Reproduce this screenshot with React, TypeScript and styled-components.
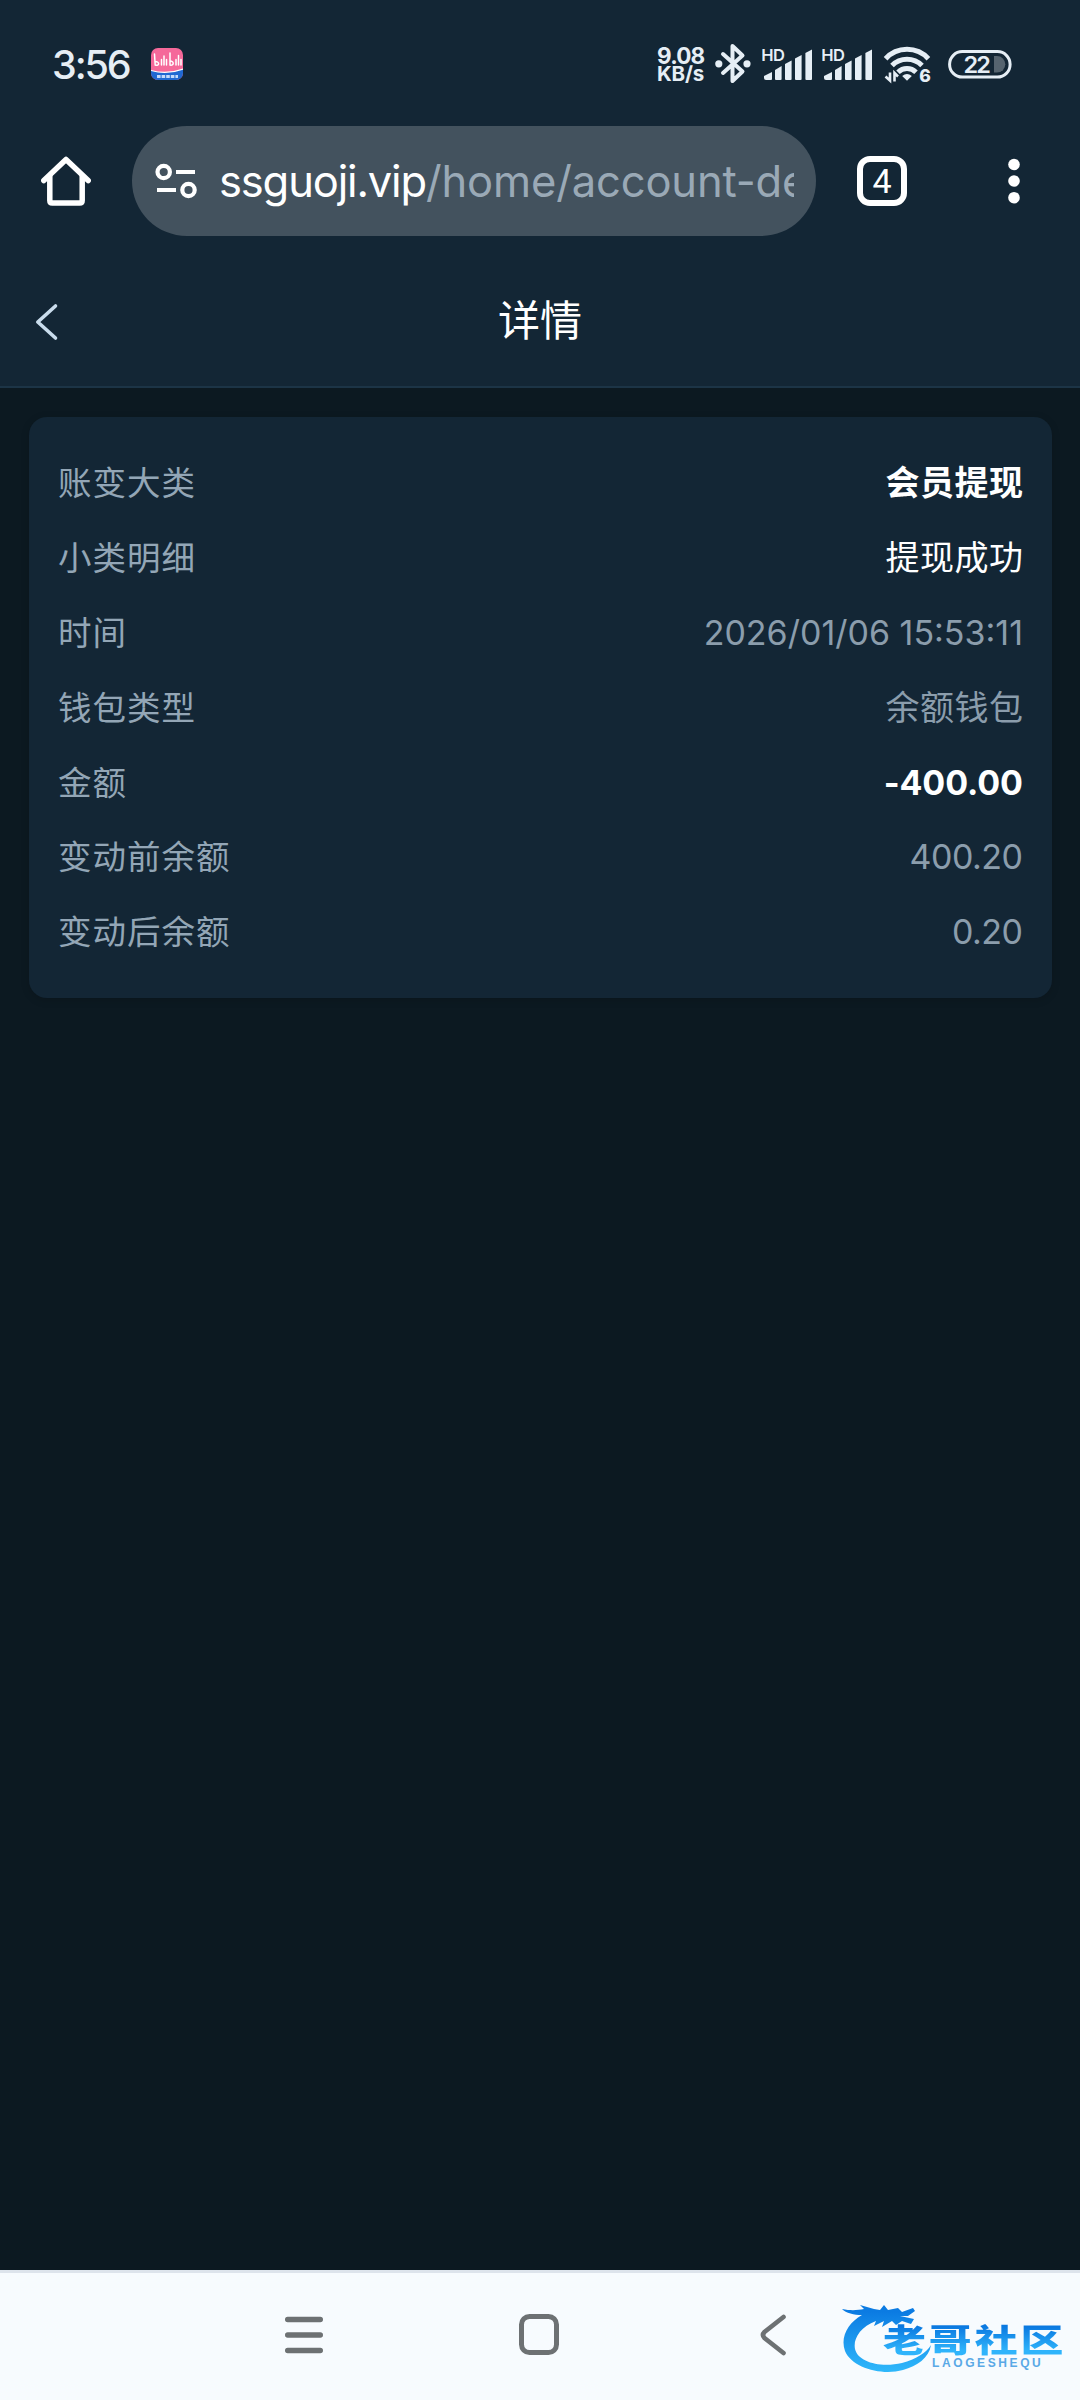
import React from 'react';
import styled, { createGlobalStyle } from 'styled-components';

const latin = `Inter, "Noto Sans CJK SC", sans-serif`;

const GlobalStyle = createGlobalStyle`
  * { box-sizing: border-box; }
  body { margin: 0; background: #0c1921; }
`;

const Screen = styled.div`
  width: 1080px;
  height: 2400px;
  display: flex;
  flex-direction: column;
  background: #0c1921;
  font-family: ${latin};
  overflow: hidden;
`;

const StatusBar = styled.header`
  height: 126px;
  flex: none;
  display: flex;
  align-items: flex-start;
  padding: 42px 68px 0 52px;
  background: #132635;
  color: #e6eef5;
`;

const Clock = styled.div`
  width: 99px;
  font-size: 39.5px;
  line-height: 46px;
  font-weight: 500;
  letter-spacing: -2.1px;
  white-space: nowrap;
`;

const AppBadge = styled.svg`
  margin-top: 6px;
`;

const StatusIcons = styled.div`
  margin-left: auto;
  display: flex;
  align-items: flex-start;
`;

const NetSpeed = styled.div`
  width: 58px;
  padding-top: 5px;
  display: flex;
  flex-direction: column;
  font-weight: 700;
`;

const SpeedLine = styled.span<{ $size: number; $spacing: number }>`
  height: 18px;
  line-height: 18px;
  font-size: ${p => p.$size}px;
  letter-spacing: ${p => p.$spacing}px;
  white-space: nowrap;
`;

const Toolbar = styled.div`
  height: 132px;
  flex: none;
  display: flex;
  align-items: flex-start;
  padding-left: 41px;
  background: #132635;
  color: #fff;
`;

const HomeIcon = styled.svg`
  margin: 30px 41px 0 0;
`;

const UrlPill = styled.div`
  width: 684px;
  height: 110px;
  border-radius: 55px;
  background: #43525e;
  display: flex;
  align-items: center;
  padding: 0 22px 0 23px;
`;

const UrlText = styled.div`
  flex: 1;
  margin-left: 20px;
  overflow: hidden;
  white-space: nowrap;
  font-size: 43.5px;
  line-height: 56px;
  letter-spacing: -1.15px;
  color: #fff;
`;

const UrlPath = styled.span`
  letter-spacing: -0.15px;
  color: #9aa9b6;
`;

const TabCount = styled.div`
  width: 50px;
  height: 50px;
  margin: 30px 0 0 41px;
  border: 6px solid #fff;
  border-radius: 13px;
  display: flex;
  align-items: center;
  justify-content: center;
  font-family: Roboto, sans-serif;
  font-size: 34px;
  line-height: 38px;
`;

const MoreDots = styled.svg`
  margin: 30px 0 0 99px;
`;

const PageHeader = styled.div`
  height: 130px;
  flex: none;
  display: grid;
  grid-template-columns: 100px 1fr 100px;
  align-items: center;
  background: #132635;
  border-bottom: 2px solid #1c3446;
`;

const BackIcon = styled.svg`
  margin-left: 34px;
`;

const Title = styled.h1`
  margin: 0;
  text-align: center;
  font-size: 42px;
  line-height: 58px;
  padding-bottom: 2px;
  font-weight: 400;
  color: #fff;
`;

const Content = styled.main`
  flex: 1;
  padding: 29px 28px 0 29px;
`;

const Card = styled.section`
  height: 581px;
  border-radius: 18px;
  background: #132635;
  padding: 29px;
  box-shadow: 0 2px 8px rgba(0, 0, 0, 0.15);
`;

const Row = styled.div`
  height: 74.8px;
  display: flex;
  align-items: center;
  justify-content: space-between;
  font-size: 34px;
  line-height: 50px;
`;

const Label = styled.span`
  font-size: 33.5px;
  letter-spacing: 1px;
  color: #93a6b6;
`;

const Value = styled.span<{ $tone: Tone; $spacing: number }>`
  color: ${p => (p.$tone === 'muted' ? '#8b9dac' : '#fff')};
  font-weight: ${p => (p.$tone === 'strong' ? 700 : 400)};
  letter-spacing: ${p => p.$spacing}px;
  margin-right: ${p => -p.$spacing}px;
`;

const NavBar = styled.nav`
  height: 130px;
  flex: none;
  display: flex;
  align-items: flex-start;
  background: #f7fbfe;
  border-top: 3px solid #dde4ec;
`;

const NavIcon = styled.svg<{ $gap: number }>`
  margin: 40px 0 0 ${p => p.$gap}px;
`;

const Brand = styled.div`
  position: relative;
  width: 224px;
  height: 82px;
  margin: 23px 0 0 55px;
`;

const BrandName = styled.div`
  position: absolute;
  left: 41px;
  top: 25px;
  font-family: "Noto Sans CJK SC", sans-serif;
  font-weight: 900;
  font-size: 32px;
  line-height: 35px;
  letter-spacing: 2.2px;
  transform: scaleX(1.34);
  transform-origin: 0 0;
  white-space: nowrap;
  color: transparent;
  background: linear-gradient(#0a78e0 15%, #2fb4fb 85%);
  background-clip: text;
  -webkit-background-clip: text;
`;

const BrandLatin = styled.div`
  position: absolute;
  left: 90px;
  top: 61px;
  font-family: "Liberation Sans", sans-serif;
  font-size: 12px;
  line-height: 12px;
  letter-spacing: 2.6px;
  font-weight: 700;
  white-space: nowrap;
  color: #5aa9e6;
`;

type Tone = 'muted' | 'plain' | 'strong';

const rows: { label: string; value: string; tone: Tone; spacing: number }[] = [
  { label: '账变大类', value: '会员提现', tone: 'strong', spacing: 0.5 },
  { label: '小类明细', value: '提现成功', tone: 'plain', spacing: 0.5 },
  { label: '时间', value: '2026/01/06 15:53:11', tone: 'muted', spacing: 0 },
  { label: '钱包类型', value: '余额钱包', tone: 'muted', spacing: 0.5 },
  { label: '金额', value: '-400.00', tone: 'strong', spacing: -0.1 },
  { label: '变动前余额', value: '400.20', tone: 'muted', spacing: -0.5 },
  { label: '变动后余额', value: '0.20', tone: 'muted', spacing: -0.5 },
];

const Hd = styled.text`
  font: 600 16.5px Inter, sans-serif;
  letter-spacing: -0.6px;
`;

function Signal() {
  return (
    <svg width="60" height="46" viewBox="0 0 60 46" fill="currentColor">
      <Hd x="-0.8" y="18.5">HD</Hd>
      <path d="M2 36V34L10 30V37Q10 38 9 38H4Q2 38 2 36Z" />
      <path d="M13 28L19.6 24V37Q19.6 38 18.6 38H14Q13 38 13 37Z" />
      <path d="M23 22L29.6 18.5V37Q29.6 38 28.6 38H24Q23 38 23 37Z" />
      <path d="M33 16.5L39.6 13V37Q39.6 38 38.6 38H34Q33 38 33 37Z" />
      <path d="M43.4 11L50 7.5V37Q50 38 49 38H44.4Q43.4 38 43.4 37Z" />
    </svg>
  );
}

export default function App() {
  return (
    <Screen>
      <GlobalStyle />
      <StatusBar>
        <Clock>3:56</Clock>
        <AppBadge width="32" height="32" viewBox="0 0 32 32">
          <defs>
            <clipPath id="badge"><rect width="32" height="32" rx="7" /></clipPath>
          </defs>
          <g clipPath="url(#badge)">
            <rect width="32" height="32" fill="#f5699a" />
            <path d="M0 22.5Q16 27 32 21V32H0Z" fill="#1f68d2" />
            <path d="M0 22.5Q16 27 32 21" stroke="#fff" strokeWidth="1.2" fill="none" />
            <path d="M3.5 6L4.2 17C8.5 18.5 9 13.5 4.2 13.5M10.5 11.5V17M13 8V17M15.5 11.5V17M19 5V17C23 18 23.5 13 19 13M25 11.5V17M27.5 7.5V17M30 11.5V17" stroke="#fff" strokeWidth="1.5" fill="none" strokeLinecap="round" />
            <path d="M6 28.5H27" stroke="#c4dafa" strokeWidth="3" strokeDasharray="3.6 1" />
          </g>
        </AppBadge>
        <StatusIcons>
          <NetSpeed>
            <SpeedLine $size={22.5} $spacing={-0.8}>9.08</SpeedLine>
            <SpeedLine $size={20.5} $spacing={-0.2}>KB/s</SpeedLine>
          </NetSpeed>
          <svg width="47" height="46" viewBox="0 0 47 46" fill="none" stroke="currentColor" strokeWidth="4" strokeLinejoin="round" strokeLinecap="round">
            <path d="M8 12L27.5 29.5L17.5 39V4L27.5 13.5L8 31" />
            <circle cx="3.8" cy="21.8" r="1.6" fill="currentColor" />
            <circle cx="32" cy="21.8" r="1.6" fill="currentColor" />
          </svg>
          <Signal />
          <Signal />
          <svg width="66" height="46" viewBox="0 0 66 46" fill="none" stroke="currentColor">
            <g strokeWidth="5">
              <path d="M3.6 16.8A29 29 0 0 1 46.4 16.8" />
              <path d="M10 23.6A21 21 0 0 1 40 23.6" />
              <path d="M16 30.2A13 13 0 0 1 34 30.2" />
            </g>
            <path d="M20.2 34Q25 30 29.8 34L25 38.8Z" fill="currentColor" stroke="none" />
            <path d="M8 30.5V38.5L3.5 34.5M12.5 39.5V31L16 34.5" strokeWidth="2.6" />
            <text x="37.2" y="40.3" fill="currentColor" stroke="none" fontFamily="Inter" fontWeight="800" fontSize="17.5">6</text>
          </svg>
          <svg width="64" height="46" viewBox="0 0 64 46">
            <rect x="1.6" y="9.6" width="60.5" height="25.5" rx="12.7" fill="none" stroke="currentColor" strokeWidth="3" />
            <path d="M46 14H49A8.3 8.3 0 0 1 49 30.6H46Z" fill="#56646f" />
            <text x="15.5" y="31" fill="currentColor" fontFamily="Inter" fontWeight="600" fontSize="23.5" letterSpacing="-1.8">22</text>
          </svg>
        </StatusIcons>
      </StatusBar>

      <Toolbar>
        <HomeIcon width="50" height="50" viewBox="0 0 50 50" fill="none" stroke="#fff" strokeWidth="5.5" strokeLinejoin="round" strokeLinecap="round">
          <path d="M2.8 24.5L25 3.5L47.2 24.5" />
          <path d="M8.8 20V44.5Q8.8 47 11.3 47H38.7Q41.2 47 41.2 44.5V20" />
        </HomeIcon>
        <UrlPill>
          <svg width="44" height="36" viewBox="0 0 44 36" fill="none" stroke="#fff" strokeWidth="4.2">
            <circle cx="8.7" cy="9" r="6.2" />
            <circle cx="33.5" cy="27" r="6.2" />
            <path d="M21 9H40M2 27H21" />
          </svg>
          <UrlText>ssguoji.vip<UrlPath>/home/account-de</UrlPath></UrlText>
        </UrlPill>
        <TabCount>4</TabCount>
        <MoreDots width="16" height="50" viewBox="0 0 16 50" fill="#fff">
          <circle cx="8" cy="8.5" r="5.8" />
          <circle cx="8" cy="25" r="5.8" />
          <circle cx="8" cy="41.7" r="5.8" />
        </MoreDots>
      </Toolbar>

      <PageHeader>
        <BackIcon width="26" height="40" viewBox="0 0 26 40" fill="none" stroke="#c9dcec" strokeWidth="3.6" strokeLinecap="round" strokeLinejoin="round">
          <path d="M21.5 4L3.8 20L21.5 36" />
        </BackIcon>
        <Title>详情</Title>
      </PageHeader>

      <Content>
        <Card>
          {rows.map(r => (
            <Row key={r.label}>
              <Label>{r.label}</Label>
              <Value $tone={r.tone} $spacing={r.spacing}>{r.value}</Value>
            </Row>
          ))}
        </Card>
      </Content>

      <NavBar>
        <NavIcon $gap={284} width="40" height="46" viewBox="0 0 40 46" stroke="#6d7173" strokeWidth="5.4" strokeLinecap="round">
          <path d="M3.7 6.5H36.3M3.7 22H36.3M3.7 37.5H36.3" />
        </NavIcon>
        <NavIcon $gap={193} width="44" height="46" viewBox="0 0 44 46" fill="none" stroke="#6d7173" strokeWidth="5">
          <rect x="4.5" y="3.5" width="35" height="36" rx="8" />
        </NavIcon>
        <NavIcon $gap={198} width="28" height="46" viewBox="0 0 28 46" fill="none" stroke="#6d7173" strokeWidth="4.6" strokeLinecap="round">
          <path d="M24.5 4L5.5 19Q2.5 22 5.5 25L24.5 40" />
        </NavIcon>
        <Brand>
          <svg width="110" height="82" viewBox="0 0 110 82">
            <defs>
              <linearGradient id="dragon" x1="0" y1="0" x2="0" y2="1">
                <stop offset="0.1" stopColor="#0b7be2" />
                <stop offset="1" stopColor="#2fb8fb" />
              </linearGradient>
            </defs>
            <path fill="url(#dragon)" d="M0 13C10 15 16 14 22 13L18 9L32 13L38 14L42 9L46 14L56 12L60 16L71 12L73 15L66 20L58 20L72 23L69 28L60 25L54 29L50 25L40 31L42 25L32 30L34 25C18 31 11 43 13 53C16 66 38 72 60 67C74 63 84 57 89 49C87 62 75 70 61 74C40 80 10 72 3 55C-2 41 6 27 20 19C12 19 4 17 0 13Z" />
          </svg>
          <BrandName>老哥社区</BrandName>
          <BrandLatin>LAOGESHEQU</BrandLatin>
        </Brand>
      </NavBar>
    </Screen>
  );
}
